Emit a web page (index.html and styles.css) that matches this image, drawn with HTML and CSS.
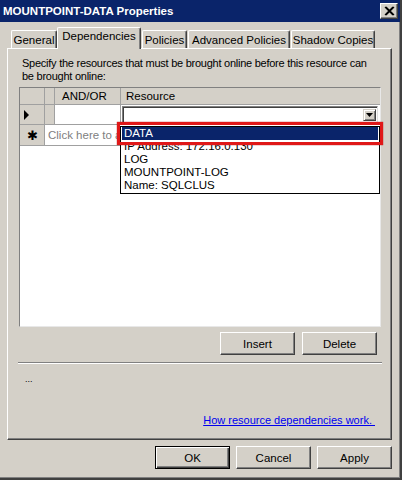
FILE: index.html
```html
<!DOCTYPE html>
<html lang="en">
<head>
    <meta charset="UTF-8">
    <title>MOUNTPOINT-DATA Properties</title>
    <link rel="stylesheet" href="styles.css">
</head>
<body>
<div class="window">
    <!--标题栏-->
    <div class="titleBar">
        <span class="titleText">MOUNTPOINT-DATA Properties</span>
        <div class="closeBtn">
            <svg width="11" height="10" viewBox="0 0 11 10">
                <path d="M1 1 L9 9 M2 1 L10 9 M9 1 L1 9 M10 1 L2 9" stroke="#000" stroke-width="1.2"/>
            </svg>
        </div>
    </div>

    <!--选项卡-->
    <div class="tabs">
        <div class="tab tabGeneral">General</div>
        <div class="tab tabActive">Dependencies</div>
        <div class="tab tabPolicies">Policies</div>
        <div class="tab tabAdvanced">Advanced Policies</div>
        <div class="tab tabShadow">Shadow Copies</div>
    </div>

    <div class="panel">
        <div class="intro">Specify the resources that must be brought online before this resource can be brought online:</div>

        <div class="grid">
            <div class="gridRow headRow">
                <div class="cell rowHead"></div>
                <div class="cell narrow"></div>
                <div class="cell andOr">AND/OR</div>
                <div class="cell resource">Resource</div>
            </div>
            <div class="gridRow row1">
                <div class="cell rowHead">
                    <svg width="6" height="10" viewBox="0 0 6 10"><path d="M0 0 L5 5 L0 10 Z" fill="#000"/></svg>
                </div>
                <div class="cell narrow"></div>
                <div class="cell andOr white"></div>
                <div class="cell resource white">
                    <div class="combo">
                        <div class="comboArrow">
                            <svg width="7" height="4" viewBox="0 0 7 4"><path d="M0 0 L7 0 L3.5 4 Z" fill="#000"/></svg>
                        </div>
                    </div>
                </div>
            </div>
            <div class="gridRow row2">
                <div class="cell rowHead star">✱</div>
                <div class="cell newRow"><span class="newRowText">Click here to add a new dependency</span></div>
            </div>
            <div class="gridFill"></div>

            <!--下拉列表-->
            <div class="dropList">
                <div class="item itemSelected">DATA</div>
                <div class="item">IP Address: 172.16.0.130</div>
                <div class="item">LOG</div>
                <div class="item">MOUNTPOINT-LOG</div>
                <div class="item">Name: SQLCLUS</div>
            </div>
            <div class="redMark"></div>
        </div>

        <div class="gridButtons">
            <div class="btn">Insert</div>
            <div class="btn">Delete</div>
        </div>

        <div class="separator"></div>
        <div class="dots">...</div>

        <div class="linkRow">
            <span class="link">How resource dependencies work.&nbsp;</span>
        </div>
    </div>

    <!--底部按钮-->
    <div class="footer">
        <div class="btn btnDefault">OK</div>
        <div class="btn">Cancel</div>
        <div class="btn">Apply</div>
    </div>
</div>
</body>
</html>
```

FILE: styles.css
```css
* {
    margin: 0;
    padding: 0;
    box-sizing: border-box;
}

body {
    width: 402px;
    height: 480px;
    overflow: hidden;
    background-color: #d4d0c8;
    font-family: "Liberation Sans", Arial, sans-serif;
    font-size: 11px;
    color: #000;
}

.window {
    width: 402px;
    height: 480px;
    display: flex;
    flex-direction: column;
    border-right: 2px solid #404040;
    border-bottom: 2px solid #404040;
    box-shadow: inset -1px -1px 0 #808080;
}

.titleBar {
    height: 22px;
    background-color: #0a246a;
    display: flex;
    align-items: center;
    justify-content: space-between;
    padding: 0 2px 0 3px;
}

.titleText {
    color: #fff;
    font-weight: bold;
    font-size: 11.5px;
}

.closeBtn {
    width: 18px;
    height: 16px;
    background-color: #d4d0c8;
    border-top: 1px solid #fff;
    border-left: 1px solid #fff;
    border-right: 1px solid #404040;
    border-bottom: 1px solid #404040;
    box-shadow: inset -1px -1px 0 #808080;
    display: flex;
    align-items: center;
    justify-content: center;
}

.tabs {
    height: 21px;
    margin-top: 5px;
    padding-left: 11px;
    display: flex;
    align-items: flex-end;
    position: relative;
    z-index: 1;
}

.tab {
    height: 18px;
    padding-top: 3px;
    text-align: center;
    font-size: 11.5px;
    background-color: #d4d0c8;
    border-top: 1px solid #fff;
    border-left: 1px solid #fff;
    border-right: 1px solid #404040;
    box-shadow: inset -1px 0 0 #808080;
    border-radius: 2px 2px 0 0;
}

.tabGeneral { width: 46px; }
.tabPolicies { width: 45px; }
.tabAdvanced { width: 102px; margin-left: 1px; }
.tabShadow { width: 84px; margin-left: 1px; }

.tabActive {
    width: 84px;
    height: 22px;
    margin-bottom: -1px;
    padding-top: 2px;
    margin-right: 1px;
}

.panel {
    height: 392px;
    margin: 0 8px 0 7px;
    border-top: 1px solid #fff;
    border-left: 1px solid #fff;
    border-right: 1px solid #404040;
    border-bottom: 1px solid #404040;
    box-shadow: inset -1px -1px 0 #808080;
    padding: 8px 10px 0 11px;
    display: flex;
    flex-direction: column;
}

.intro {
    line-height: 13px;
    width: 362px;
    padding-left: 3px;
    font-size: 11px;
    letter-spacing: -0.25px;
}

.grid {
    position: relative;
    margin-top: 4px;
    height: 240px;
    width: 362px;
    background-color: #fff;
    border-top: 1px solid #808080;
    border-left: 1px solid #808080;
    border-right: 1px solid #e8e8e8;
    border-bottom: 1px solid #e8e8e8;
    display: flex;
    flex-direction: column;
}

.gridRow {
    display: flex;
}

.cell {
    border-right: 1px solid #a0a0a0;
    border-bottom: 1px solid #a0a0a0;
    background-color: #d4d0c8;
    display: flex;
    align-items: center;
    font-size: 11.5px;
}

.headRow {
    height: 17px;
}

.rowHead {
    width: 25px;
    justify-content: center;
}

.narrow {
    width: 10px;
}

.andOr {
    width: 66px;
    padding-left: 7px;
}

.resource {
    flex-grow: 1;
    padding-left: 5px;
    border-right: none;
}

.row1 {
    height: 20px;
}

.row1 .rowHead {
    justify-content: flex-start;
    padding-left: 4px;
}

.white {
    background-color: #fff;
}

.row1 .resource {
    padding: 1px 2px 1px 1px;
}

.combo {
    width: 100%;
    height: 100%;
    border-top: 1px solid #808080;
    border-left: 1px solid #808080;
    border-right: 1px solid #e0e0e0;
    border-bottom: 1px solid #e0e0e0;
    box-shadow: inset 1px 1px 0 #404040;
    display: flex;
    justify-content: flex-end;
    padding: 2px 1px 1px 2px;
}

.comboArrow {
    width: 13px;
    height: 100%;
    background-color: #d4d0c8;
    border-top: 1px solid #d4d0c8;
    border-left: 1px solid #d4d0c8;
    border-right: 1px solid #404040;
    border-bottom: 1px solid #404040;
    box-shadow: inset 1px 1px 0 #fff, inset -1px -1px 0 #808080;
    display: flex;
    align-items: center;
    justify-content: center;
}

.row2 {
    height: 21px;
}

.star {
    font-size: 13px;
}

.newRow {
    flex-grow: 1;
    background-color: #fff;
    color: #808080;
    padding-left: 3px;
    border-right: none;
}

/* 下拉列表盖住的部分裁掉 */
.newRowText {
    display: block;
    max-width: 72px;
    white-space: nowrap;
    overflow: hidden;
    text-overflow: clip;
}

.gridFill {
    flex-grow: 1;
}

.dropList {
    position: absolute;
    left: 100px;
    top: 38px;
    width: 260px;
    height: 68px;
    background-color: #fff;
    border: 1px solid #000;
    padding: 0 1px;
}

.item {
    height: 13px;
    line-height: 13px;
    padding-left: 2px;
    font-size: 11.5px;
    white-space: nowrap;
}

.itemSelected {
    background-color: #0a246a;
    color: #fff;
}

.redMark {
    position: absolute;
    left: 97px;
    top: 34px;
    width: 266px;
    height: 23px;
    border: 3px solid #e01818;
    box-shadow: 0 0 1px #a00000;
}

.gridButtons {
    display: flex;
    justify-content: flex-end;
    gap: 7px;
    margin-top: 5px;
    padding-right: 4px;
}

.btn {
    width: 75px;
    height: 23px;
    display: flex;
    align-items: center;
    justify-content: center;
    font-size: 11.5px;
    background-color: #d4d0c8;
    border-top: 1px solid #fff;
    border-left: 1px solid #fff;
    border-right: 1px solid #404040;
    border-bottom: 1px solid #404040;
    box-shadow: inset -1px -1px 0 #808080;
}

.separator {
    margin-top: 7px;
    height: 2px;
    width: 364px;
    margin-left: -1px;
    border-top: 1px solid #808080;
    border-bottom: 1px solid #fff;
}

.dots {
    margin-top: 10px;
    padding-left: 6px;
    font-size: 9px;
}

.linkRow {
    margin-top: 30px;
    display: flex;
    justify-content: flex-end;
    padding-right: 6px;
}

.link {
    color: #0000ee;
    font-size: 11px;
    text-decoration: underline;
}

.footer {
    display: flex;
    justify-content: flex-end;
    gap: 6px;
    margin-top: 6px;
    padding-right: 8px;
}

.btnDefault {
    border: 1px solid #000;
    box-shadow: inset 1px 1px 0 #fff, inset -1px -1px 0 #404040, inset -2px -2px 0 #808080;
}
```
